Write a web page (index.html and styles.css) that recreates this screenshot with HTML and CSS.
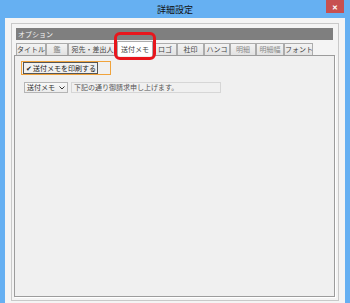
FILE: index.html
```html
<!DOCTYPE html>
<html lang="ja">
<head>
    <meta charset="UTF-8">
    <title>詳細設定</title>
    <link rel="stylesheet" href="styles.css">
</head>
<body>

    <div class="window">
        <div class="titlebar">
            <span class="title">詳細設定</span>
            <span class="close">&#x2715;</span>
        </div>

        <div class="client">
            <div class="group">
                <div class="group-head">オプション</div>

                <!-- tab strip -->
                <div class="tabs">
                    <span class="tab w30">タイトル</span>
                    <span class="tab w22 dim">鑑</span>
                    <span class="tab w49">宛先・差出人</span>
                    <span class="tab w36 active">送付メモ<span class="mark"></span></span>
                    <span class="tab w24">ロゴ</span>
                    <span class="tab w27">社印</span>
                    <span class="tab w26">ハンコ</span>
                    <span class="tab w26 dim">明細</span>
                    <span class="tab w28 dim">明細幅</span>
                    <span class="tab w29">フォント</span>
                </div>

                <div class="panel">
                    <div class="check-row">
                        <span class="focus">
                            <span class="check-box">&#x2714;</span>
                            <span class="check-label">送付メモを印刷する</span>
                        </span>
                    </div>

                    <div class="memo-row">
                        <span class="combo">
                            <span>送付メモ</span>
                            <svg class="arrow" width="6" height="4" viewBox="0 0 6 4">
                                <path d="M0.5 0.5 L3 3 L5.5 0.5" fill="none" stroke="#333" stroke-width="1"/>
                            </svg>
                        </span>
                        <span class="memo-input">下記の通り御請求申し上げます。</span>
                    </div>
                </div>
            </div>
        </div>
    </div>

</body>
</html>
```

FILE: styles.css
```css
body {
    margin: 0;
    font-family: "Noto Sans CJK JP", "Noto Sans", sans-serif;
    color: #333;
}

/* window frame */
.window {
    width: 350px;
    height: 303px;
    box-sizing: border-box;
    padding: 0 5px;
    background-color: #66b0f2;
    display: flex;
    flex-direction: column;
    overflow: hidden;
}

.titlebar {
    height: 18px;
    display: flex;
    justify-content: center;
    align-items: center;
    position: relative;
}

.title {
    font-size: 9px;
    color: #111;
}

.close {
    position: absolute;
    top: 0;
    right: 1px;
    width: 18px;
    height: 13px;
    background-color: #c75050;
    color: #fff;
    font-size: 7px;
    font-weight: bold;
    display: flex;
    justify-content: center;
    align-items: center;
}

.client {
    flex: 1;
    background-color: #f4f4f4;
    padding: 5px 6px 2px 6px;
    display: flex;
    flex-direction: column;
}

/* option group */
.group {
    flex: 1;
    border: 1px solid #c9c9c9;
    padding: 4px 3px 3px 2px;
    display: flex;
    flex-direction: column;
}

.group-head {
    margin: 0 2px;
    height: 12px;
    line-height: 12px;
    padding-left: 2px;
    background-color: #7f7f7f;
    color: #f4f4f4;
    font-size: 7px;
}

.tabs {
    margin-top: 1px;
    padding-left: 2px;
    display: flex;
    align-items: flex-end;
    height: 14px;
}

.tab {
    box-sizing: border-box;
    height: 12px;
    line-height: 11px;
    border: 1px solid #acacac;
    border-bottom: none;
    background: linear-gradient(#f3f3f3, #e2e2e2);
    font-size: 7px;
    text-align: center;
    white-space: nowrap;
    color: #444;
}

.tab.dim {
    color: #8a8a8a;
}

.tab.active {
    height: 15px;
    line-height: 14px;
    margin-bottom: -1px;
    background: #fff;
    position: relative;
    z-index: 1;
}

.w22 { width: 22px; }
.w24 { width: 24px; }
.w26 { width: 26px; }
.w27 { width: 27px; }
.w28 { width: 28px; }
.w29 { width: 29px; }
.w30 { width: 30px; }
.w36 { width: 36px; }
.w49 { width: 49px; }

/* red highlight round the chosen tab */
.mark {
    position: absolute;
    left: -4px;
    right: -4px;
    top: -10px;
    bottom: -4px;
    border: 3px solid #e8161c;
    border-radius: 6px;
}

.panel {
    flex: 1;
    border: 1px solid #9c9c9c;
    box-shadow: 1px 1px 0 #fff;
    background-color: #f0f0f0;
    padding: 5px 6px;
}

.check-row {
    width: 90px;
    height: 14px;
    box-sizing: border-box;
    border: 1px solid #f0a33c;
    padding: 0 0 0 1px;
    display: flex;
    align-items: center;
}

.focus {
    display: flex;
    align-items: center;
    height: 10px;
    border: 1px solid #555;
    padding-right: 1px;
}

.check-box {
    width: 9px;
    font-size: 7px;
    line-height: 10px;
    text-align: center;
    color: #222;
}

.check-label {
    font-size: 7px;
    line-height: 10px;
    color: #222;
}

.memo-row {
    margin-top: 7px;
    margin-left: 3px;
    display: flex;
    gap: 3px;
}

.combo {
    box-sizing: border-box;
    width: 44px;
    height: 11px;
    border: 1px solid #b5b5b5;
    background: linear-gradient(#f8f8f8, #ececec);
    font-size: 7px;
    line-height: 9px;
    padding: 0 2px;
    display: flex;
    align-items: center;
    justify-content: space-between;
}

.memo-input {
    box-sizing: border-box;
    width: 150px;
    height: 11px;
    border: 1px solid #d6d6d6;
    font-size: 7px;
    line-height: 9px;
    padding-left: 2px;
    color: #555;
}
```
